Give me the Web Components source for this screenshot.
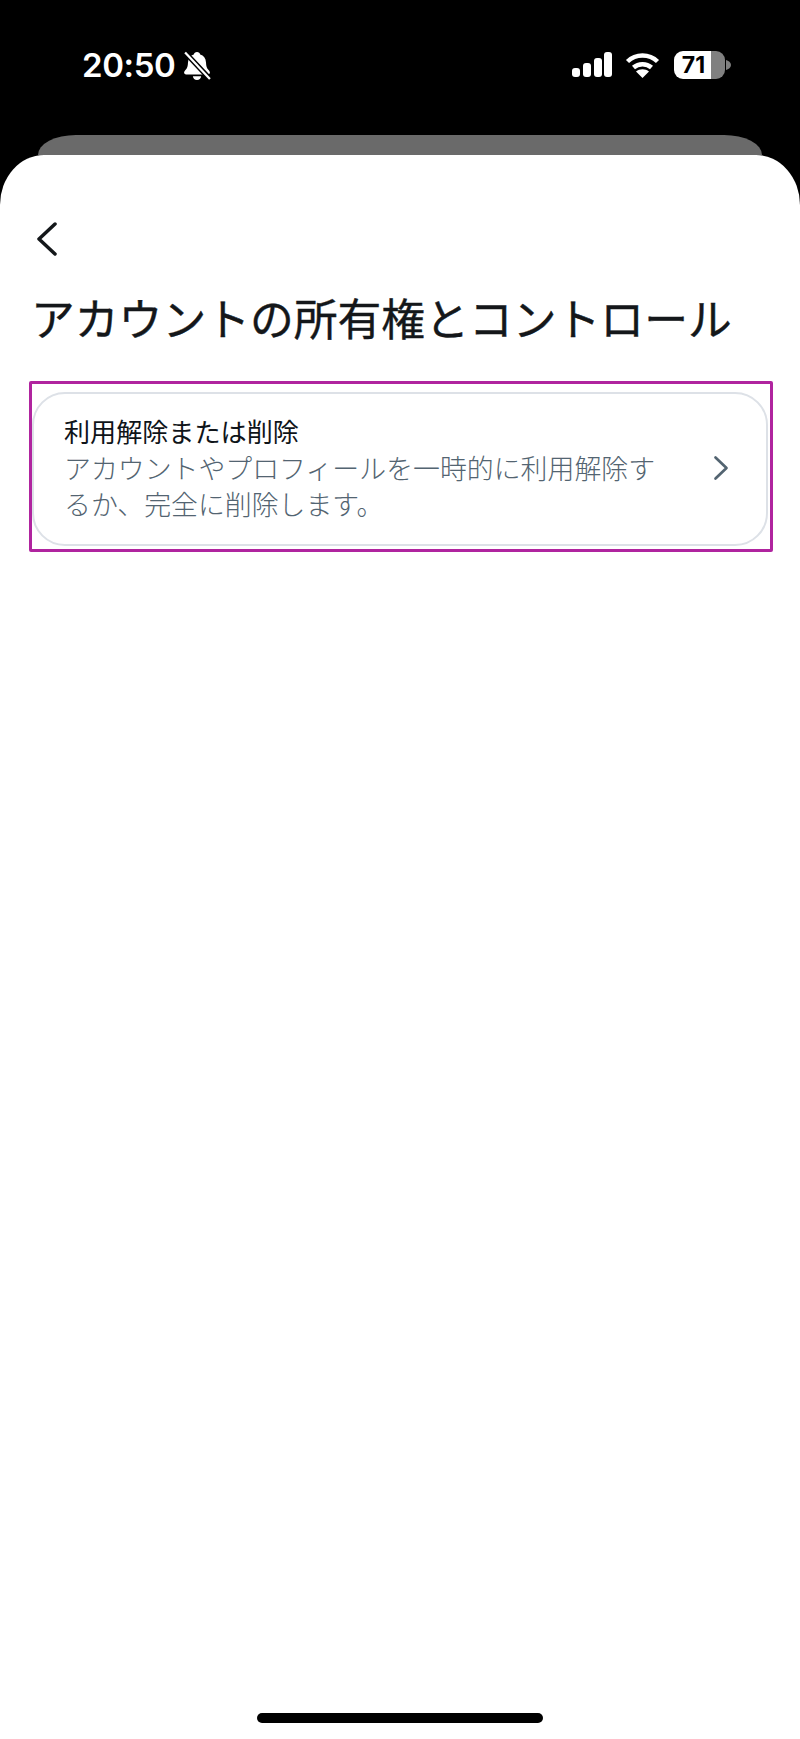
<!DOCTYPE html>
<html lang="ja">
<head>
<meta charset="utf-8">
<title>アカウントの所有権とコントロール</title>
<style>
    html, body { margin: 0; padding: 0; height: 100%; background: #000; }
    body { font-family: "Noto Sans CJK JP", "Inter", sans-serif; }
</style>
</head>
<body>
<account-screen>
    <status-bar slot="status" time="20:50" battery="71"></status-bar>
    <settings-sheet heading="アカウントの所有権とコントロール">
        <highlight-box>
            <settings-item label="利用解除または削除">アカウントやプロフィールを一時的に利用解除するか、完全に削除します。</settings-item>
        </highlight-box>
    </settings-sheet>
</account-screen>

<script>
class AccountScreen extends HTMLElement {
    constructor() {
        super();
        this.attachShadow({ mode: 'open' });
        this.shadowRoot.innerHTML = `
            <style>
                :host { display: flex; flex-direction: column; width: 800px; height: 1739px; background: #000; overflow: hidden; }
                .behind { height: 20px; margin: 0 38px; flex: none; background: #6a6a6a; border-radius: 38px 38px 0 0 / 20px 20px 0 0; }
            </style>
            <slot name="status"></slot>
            <div class="behind"></div>
            <slot></slot>
        `;
    }
}

class StatusBar extends HTMLElement {
    constructor() {
        super();
        this.attachShadow({ mode: 'open' });
    }

    connectedCallback() {
        this.shadowRoot.innerHTML = `
            <style>
                :host { display: flex; flex: none; height: 135px; box-sizing: border-box; padding: 49px 69px 0 82px; justify-content: space-between; align-items: flex-start; color: #fff; font-family: "Inter", sans-serif; }
                .left, .right { display: flex; align-items: center; height: 33px; }
                .right { margin-top: -1px; }
                .time { font-size: 33px; font-weight: 600; line-height: 33px; letter-spacing: -0.4px; }
                .bell { margin-left: 8px; }
                .wifi { margin-left: 13px; }
                .battery { display: flex; align-items: center; justify-content: center; box-sizing: border-box; width: 51px; height: 28px; margin-left: 14px; padding-right: 12px; border-radius: 9px; color: #000; font-size: 23px; font-weight: 700; background: linear-gradient(to right, #fff 72%, #808080 72%); }
                .nub { width: 5px; height: 10px; margin-left: 1px; }
            </style>
            <div class="left">
                <span class="time">${this.getAttribute('time')}</span>
                <svg class="bell" width="28" height="30" viewBox="0 0 27 29">
                    <path fill="#fff" d="M13.5 1c1.7 0 2.800 1 3.100 2.500 3.300 1 5.400 3.800 5.600 7.500.2 3.400.6 5.500 2.700 7.700.7.800 1.100 1.500 1.100 2.200 0 1-.7 1.700-2 1.700H3c-1.300 0-2-.7-2-1.700 0-.7.4-1.400 1.100-2.200 2.100-2.200 2.500-4.300 2.700-7.700.2-3.700 2.300-6.500 5.600-7.500.3-1.500 1.400-2.500 3.100-2.500zM9.500 24.500h8c-.2 2.200-1.800 3.600-4 3.600s-3.800-1.400-4-3.600z"/>
                    <path d="M2 1.500 26 27" stroke="#000" stroke-width="5"/>
                    <path d="M2 1.500 26 27" stroke="#fff" stroke-width="2.200"/>
                </svg>
            </div>
            <div class="right">
                <svg width="40" height="25" viewBox="0 0 40 25" fill="#fff">
                    <rect x="0" y="16" width="8" height="9" rx="3"/>
                    <rect x="11" y="11" width="8" height="14" rx="3"/>
                    <rect x="22" y="6" width="8" height="19" rx="3"/>
                    <rect x="32" y="0" width="8" height="25" rx="3"/>
                </svg>
                <svg class="wifi" width="35" height="26" viewBox="0 0 35 26" fill="none" stroke="#fff" stroke-width="4.500">
                    <path d="M2.500 9.500C10.800 1.500 24.200 1.500 32.500 9.500"/>
                    <path d="M8.500 15.500c5-4.500 13-4.500 18 0"/>
                    <path fill="#fff" stroke="none" d="M17.500 26l-6.500-6.500c3.600-3 9.400-3 13 0z"/>
                </svg>
                <span class="battery">${this.getAttribute('battery')}</span>
                <svg class="nub" viewBox="0 0 5 10"><path fill="#808080" d="M0 0c2.500.6 5 2.400 5 5s-2.500 4.400-5 5z"/></svg>
            </div>
        `;
    }
}

class SettingsSheet extends HTMLElement {
    constructor() {
        super();
        this.attachShadow({ mode: 'open' });
    }

    connectedCallback() {
        this.shadowRoot.innerHTML = `
            <style>
                :host { display: flex; flex-direction: column; flex: 1; box-sizing: border-box; padding: 0 27px 0 29px; background: #fff; border-radius: 44px 44px 0 0 / 50px 50px 0 0; }
                .back { display: block; margin: 67px 0 0 6px; }
                h1 { margin: 31px 0 0 2px; font-size: 43.800px; font-weight: 400; line-height: 60px; color: #14171a; white-space: nowrap; -webkit-text-stroke: 0.400px #14171a; }
                .content { margin-top: 34px; flex: 1; display: flex; flex-direction: column; }
                .home { flex: none; align-self: center; width: 286px; height: 10px; margin: 0 0 16px -2px; background: #000; border-radius: 5px; }
            </style>
            <svg class="back" width="24" height="34" viewBox="0 0 24 34" fill="none" stroke="#14171a" stroke-width="3.500" stroke-linecap="round" stroke-linejoin="round">
                <path d="M20 2 4 17l16 15"/>
            </svg>
            <h1>${this.getAttribute('heading')}</h1>
            <div class="content"><slot></slot></div>
            <div class="home"></div>
        `;
    }
}

class HighlightBox extends HTMLElement {
    constructor() {
        super();
        this.attachShadow({ mode: 'open' });
        this.shadowRoot.innerHTML = `
            <style>
                :host { display: block; box-sizing: border-box; height: 171px; padding: 8px 2px 3px 0; border: 3px solid #b0249f; border-radius: 2px; }
            </style>
            <slot></slot>
        `;
    }
}

class SettingsItem extends HTMLElement {
    constructor() {
        super();
        this.attachShadow({ mode: 'open' });
    }

    connectedCallback() {
        this.shadowRoot.innerHTML = `
            <style>
                :host { display: flex; align-items: center; box-sizing: border-box; height: 100%; padding: 0 37px 3px 30px; border: 2px solid #dde1e7; border-radius: 33px; }
                .text { flex: 1; min-width: 0; }
                .label { margin-bottom: 1px; font-size: 26.100px; line-height: 36px; color: #0f1419; }
                .desc { width: 600px; font-size: 26.900px; font-weight: 300; line-height: 36px; color: #536471; }
            </style>
            <div class="text">
                <div class="label">${this.getAttribute('label')}</div>
                <div class="desc"><slot></slot></div>
            </div>
            <svg width="16" height="26" viewBox="0 0 16 26" fill="none" stroke="#536471" stroke-width="2.700" stroke-linecap="round" stroke-linejoin="round">
                <path d="M2.500 2.500 13.500 13 2.500 23.500"/>
            </svg>
        `;
    }
}

customElements.define('account-screen', AccountScreen);
customElements.define('status-bar', StatusBar);
customElements.define('settings-sheet', SettingsSheet);
customElements.define('highlight-box', HighlightBox);
customElements.define('settings-item', SettingsItem);
</script>
</body>
</html>
